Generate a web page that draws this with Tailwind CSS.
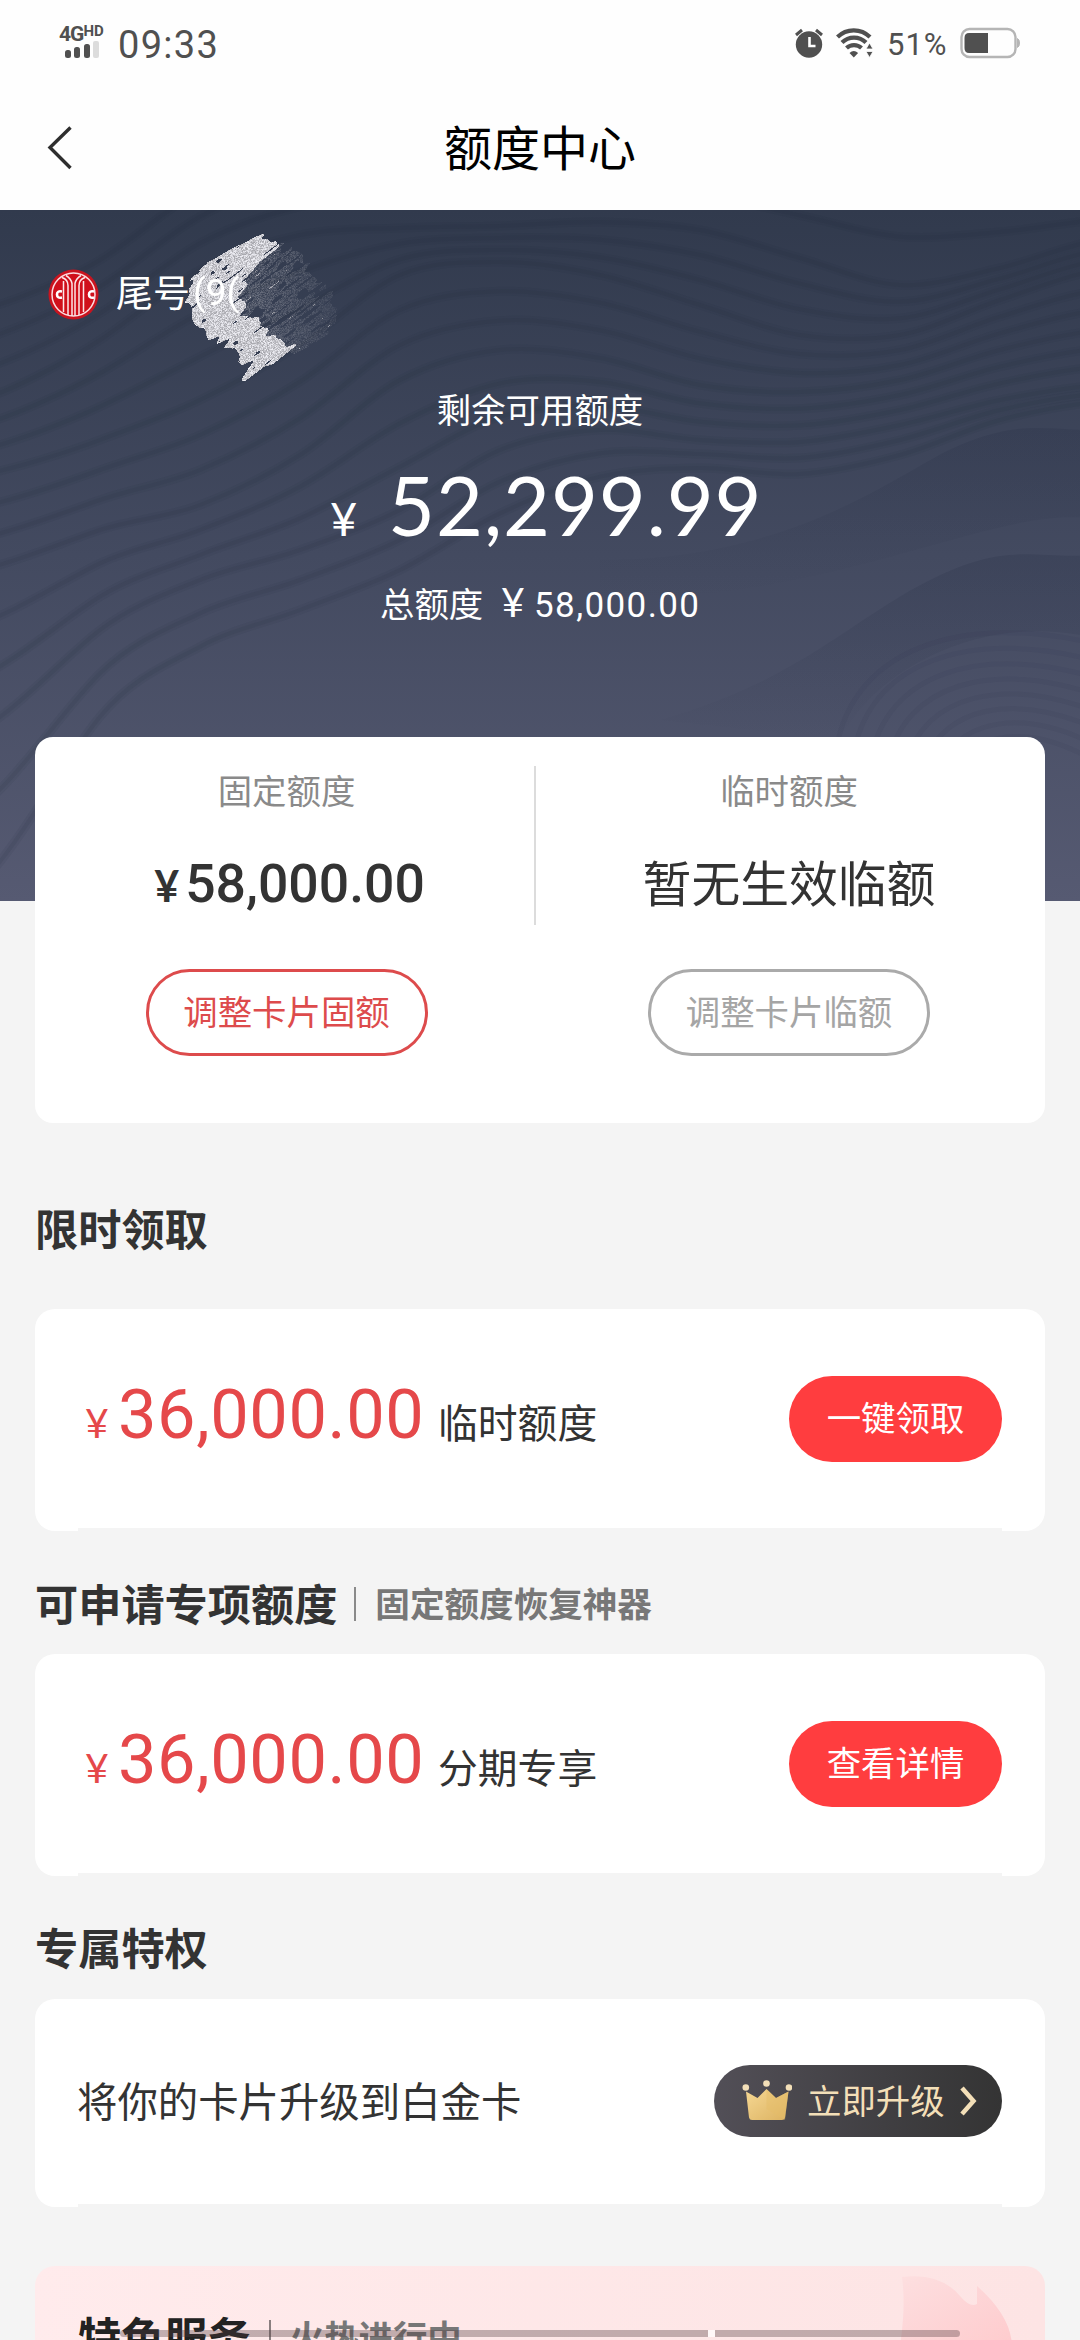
<!DOCTYPE html>
<html lang="zh-CN">
<head>
<meta charset="utf-8">
<title>额度中心</title>
<script src="https://cdn.jsdelivr.net/npm/@tailwindcss/browser@4"></script>
</head>
<body class="w-[1080px] h-[2340px] overflow-hidden bg-[#f4f4f4] text-[#333] font-['Noto_Sans_CJK_SC',sans-serif]">
<div class="relative w-[1080px] h-[2340px] overflow-hidden flex flex-col">

  <!-- status bar + title bar -->
  <header class="h-[210px] shrink-0 bg-[#fefefe] flex flex-col">
    <div class="h-[86px] flex justify-between pl-[59px] pr-[58px] text-[#505050] font-['Roboto',sans-serif]">
      <div class="flex items-center">
        <div class="flex flex-col w-[48px] mt-[-2px]">
          <div class="flex items-start leading-none font-bold h-[16px]"><span class="text-[21px] leading-[18px] tracking-[-1px]">4G</span><span class="text-[15px] leading-[13px]">HD</span></div>
          <svg class="w-[44px] h-[18px]" viewBox="0 0 44 18" fill="#505050"><rect x="6" y="9" width="6" height="8" rx="2.5"/><rect x="15" y="6" width="6" height="11" rx="2.5"/><rect x="25" y="3" width="6" height="14" rx="2.5"/><rect x="34" y="0" width="6" height="17" rx="2" fill="#dcdcdc"/></svg>
        </div>
        <span class="ml-[11px] mt-[3px] text-[38px] leading-none tracking-[1.3px]">09:33</span>
      </div>
      <div class="flex items-center">
        <svg class="w-[30px] h-[30px]" viewBox="0 0 30 30"><circle cx="15" cy="16.5" r="13.2" fill="#505050"/><path d="M2 7l6-5M28 7l-6-5" stroke="#505050" stroke-width="3"/><path d="M15.5 9v9h6" stroke="#fff" stroke-width="2.6" fill="none"/></svg>
        <svg class="ml-[12px] w-[38px] h-[30px]" viewBox="0 0 38 30" fill="none" stroke="#505050" stroke-width="4.2"><path d="M1.500 9a23 23 0 0 1 32.500 0"/><path d="M6 14.500a17 17 0 0 1 24 0"/><path d="M10.500 20a11 11 0 0 1 15 0"/><path d="M13.500 25l4.300 4.500 4.300-4.500q-4.300-4-8.600 0z" fill="#505050" stroke="none"/><path d="M30 21l3.500-6 3.500 6zM30 23.500l3.500 6 3.500-6z" fill="#505050" stroke="#fff" stroke-width=".8"/></svg>
        <span class="ml-[13px] w-[64px] mt-[2px] text-[31px] leading-none tracking-[1px]">51%</span>
        <svg class="ml-[9px] w-[62px] h-[32px]" viewBox="0 0 62 32"><rect x="1.500" y="2" width="54" height="28" rx="8" fill="none" stroke="#b5b5b5" stroke-width="2.400"/><path d="M9 6h19v20H9q-4.500 0-4.500-5V11q0-5 4.500-5z" fill="#505050"/><path d="M57.500 11.500q2 1 2 4.500t-2 4.500z" fill="#b5b5b5" stroke="#b5b5b5"/></svg>
      </div>
    </div>
    <div class="h-[124px] grid grid-cols-[200px_1fr_200px] items-center">
      <svg class="ml-[46px] mt-[-1px] w-[28px] h-[46px]" viewBox="0 0 28 46" fill="none" stroke="#2e2e2e" stroke-width="3.400"><path d="M24.500 2.500L4 22.500l20.500 20.500"/></svg>
      <h1 class="mt-[-6px] text-center text-[48px] leading-[60px] text-black">额度中心</h1>
    </div>
  </header>

  <!-- available limit -->
  <section class="relative h-[691px] shrink-0 bg-linear-to-b from-[#313a4d] via-[#434a60] to-[#565a72] text-white">
    <svg id="waves" class="absolute inset-0 w-[1080px] h-[691px]" viewBox="0 210 1080 691" fill="none"></svg>
    <div class="relative flex flex-col">
      <div class="flex items-center h-[168px] pl-[48px]">
        <svg class="w-[51px] h-[51px]" viewBox="0 0 51 51">
          <circle cx="25.500" cy="25.500" r="25" fill="#c9141f"/>
          <circle cx="25.500" cy="25.500" r="21.500" fill="#d0101b" stroke="#fbdde0" stroke-width="1.500"/>
          <g fill="none" stroke="#fbe6e8" stroke-width="1.500"><path d="M14 8.500q6 2 6 8v29.500M15.500 12v31M18 6.500q5 3 6 8v32.500M37 8.500q-6 2-6 8v29.500M35.500 12v31M33 6.500q-5 3-6 8v32.500"/></g>
          <g fill="none" stroke="#fff" stroke-width="2.600"><path d="M14 22.500q-5-1-5 3t5 3M46 22.500q-5-1-5 3t5 3"/></g>
        </svg>
        <span class="ml-[17px] mt-[-5px] text-[37px] leading-none">尾号</span>
      </div>
      <div class="h-[56px] mt-[2px] text-center text-[34.400px] leading-[56px]">剩余可用额度</div>
      <div class="flex items-baseline h-[96px] mt-[21px] pl-[330px] leading-[96px]">
        <span class="w-[58px] text-[47px] font-['Lato',sans-serif]">¥</span>
        <span class="text-[81px] font-['Lato',sans-serif] tracking-[0.9px]">52,299.99</span>
      </div>
      <div class="flex items-baseline h-[56px] mt-[21px] pl-[380px] leading-[56px]">
        <span class="w-[121px] text-[34.400px]">总额度</span>
        <span class="w-[33px] text-[41px] font-['Lato',sans-serif]">¥</span>
        <span class="text-[35px] font-['Roboto',sans-serif] tracking-[1.400px]">58,000.00</span>
      </div>
    </div>
    <canvas id="scribble" width="170" height="160" class="absolute left-[180px] top-[20px] w-[170px] h-[160px]"></canvas>
    <span class="absolute left-[193px] top-[63px] text-[37px] leading-[40px] font-['Roboto',sans-serif]">(9(</span>
  </section>

  <main class="relative mt-[-164px] px-[35px] flex flex-col">
    <!-- fixed / temporary limits -->
    <section class="relative h-[386px] rounded-[18px] bg-white grid grid-cols-[499px_2px_1fr]">
      <div class="flex flex-col items-center">
        <div class="mt-[25px] ml-[4px] text-[34.400px] leading-[54px] text-[#8a8a8a]">固定额度</div>
        <div class="mt-[33px] ml-[10px] flex items-baseline h-[70px] leading-[70px] font-medium"><span class="text-[43px] w-[31px] font-bold font-['Lato',sans-serif]">¥</span><span class="text-[53.500px] font-['Roboto',sans-serif]">58,000.00</span></div>
        <div class="mt-[50px] ml-[4px] w-[282px] h-[87px] rounded-full border-[3px] border-[#dd4b4c] flex justify-center text-[34.400px] leading-[77px] text-[#dd4b4c]">调整卡片固额</div>
      </div>
      <div class="mt-[29px] h-[159px] bg-[#dcdcdc]"></div>
      <div class="flex flex-col items-center">
        <div class="mt-[25px] mr-[3px] text-[34.400px] leading-[54px] text-[#8a8a8a]">临时额度</div>
        <div class="mt-[30px] mr-[3px] h-[70px] leading-[70px] text-[48.800px]">暂无生效临额</div>
        <div class="mt-[53px] mr-[3px] w-[282px] h-[87px] rounded-full border-[3px] border-[#aaa] flex justify-center text-[34.400px] leading-[77px] text-[#a5a5a5]">调整卡片临额</div>
      </div>
    </section>

    <h2 class="mt-[67px] h-[80px] text-[43.200px] leading-[74px] font-bold">限时领取</h2>
    <section class="mt-[39px] h-[222px] rounded-[20px] bg-white flex flex-col">
      <div class="h-[219px] flex items-center justify-between pl-[50px] pr-[43px]">
        <div class="flex items-baseline leading-[80px]">
          <span class="w-[33px] text-[41px] font-['Lato',sans-serif] text-[#e5484a]">¥</span>
          <span class="w-[320px] text-[68.500px] tracking-[0.6px] font-['Roboto',sans-serif] text-[#e5484a]">36,000.00</span>
          <span class="text-[39.800px]">临时额度</span>
        </div>
        <div class="w-[213px] h-[86px] rounded-full bg-[#ff3d3f] text-center text-[34.400px] leading-[81px] text-white">一键领取</div>
      </div>
      <div class="mx-[43px] h-[3px] bg-[#f4f4f4]"></div>
    </section>

    <div class="mt-[31px] h-[80px] flex items-center">
      <h2 class="text-[43.200px] leading-[74px] font-bold">可申请专项额度</h2>
      <div class="ml-[17px] mt-[4px] w-[2px] h-[34px] bg-[#8a8a8a]"></div>
      <span class="ml-[19px] text-[34.600px] leading-[74px] font-bold text-[#777]">固定额度恢复神器</span>
    </div>
    <section class="mt-[12px] h-[222px] rounded-[20px] bg-white flex flex-col">
      <div class="h-[219px] flex items-center justify-between pl-[50px] pr-[43px]">
        <div class="flex items-baseline leading-[80px]">
          <span class="w-[33px] text-[41px] font-['Lato',sans-serif] text-[#e5484a]">¥</span>
          <span class="w-[320px] text-[68.500px] tracking-[0.6px] font-['Roboto',sans-serif] text-[#e5484a]">36,000.00</span>
          <span class="text-[39.800px]">分期专享</span>
        </div>
        <div class="w-[213px] h-[86px] rounded-full bg-[#ff3d3f] text-center text-[34.400px] leading-[81px] text-white">查看详情</div>
      </div>
      <div class="mx-[43px] h-[3px] bg-[#f4f4f4]"></div>
    </section>

    <h2 class="mt-[33px] h-[80px] text-[43.200px] leading-[74px] font-bold">专属特权</h2>
    <section class="mt-[10px] h-[208px] rounded-[20px] bg-white flex flex-col">
      <div class="h-[205px] flex items-center justify-between pl-[42px] pr-[43px]">
        <div class="mt-[-4px] text-[40.400px] leading-[60px]">将你的卡片升级到白金卡</div>
        <div class="mt-[-2px] w-[288px] h-[72px] rounded-full bg-linear-to-r from-[#524f57] to-[#343434] flex items-center">
          <svg class="ml-[28px] mt-[-2px] w-[50px] h-[42px]" viewBox="0 0 50 42"><defs><linearGradient id="gold" x1="0" y1="0" x2="1" y2="1"><stop offset="0" stop-color="#f6d894"/><stop offset="1" stop-color="#dcb260"/></linearGradient></defs><g fill="#f3dfb8"><circle cx="3.800" cy="8.500" r="3.300"/><circle cx="24.500" cy="4.500" r="3.300"/><circle cx="47" cy="8.500" r="3.300"/></g><path d="M4 12.500l11.500 6.500 9-9 9.500 9 12.500-6.500-3.500 26q-.5 2.500-3 2.500H10q-2.500 0-3-2.500z" fill="url(#gold)"/><path d="M24.500 10v20l9.500-11zM15.500 19l9 11L43 41 46.500 12.500 34 19l-9.500 11z" fill="#e5bd69" opacity=".45"/></svg>
          <span class="ml-[15px] mt-[-4px] text-[34.400px] leading-[70px] text-[#f3dfb8]">立即升级</span>
          <svg class="ml-[13px] w-[22px] h-[32px]" viewBox="0 0 22 32" fill="none" stroke="#f3dfb8" stroke-width="4.500"><path d="M4 3l11.500 13L4 29"/></svg>
        </div>
      </div>
      <div class="mx-[43px] h-[3px] bg-[#f4f4f4]"></div>
    </section>

    <!-- featured services -->
    <section class="relative mt-[59px] h-[160px] rounded-t-[20px] bg-linear-to-r from-[#ffebec] to-[#fde4e4] overflow-hidden">
      <svg class="absolute left-[850px] top-0 w-[160px] h-[80px]" viewBox="0 0 160 80"><defs><linearGradient id="petal" x1="0" y1="0" x2="1" y2="1"><stop offset="0" stop-color="#fddfe0"/><stop offset="1" stop-color="#fecbcd"/></linearGradient></defs><path d="M17 11q38-5 58 19 10 12 17 8V20q34 30 35 60H15q6-40 2-69z" fill="url(#petal)"/></svg>
      <div class="relative flex items-center pl-[43px] h-[138px]">
        <h2 class="text-[43.200px] leading-[74px] font-bold text-[#222]">特色服务</h2>
        <div class="ml-[18px] mt-[4px] w-[2px] h-[34px] bg-[#8a7f80]"></div>
        <span class="ml-[19px] text-[34.400px] leading-[74px] font-bold text-[#777]">火热进行中</span>
      </div>
    </section>
  </main>

  <!-- system gesture bar -->
  <div class="absolute left-[120px] top-[2330px] w-[840px] h-[7px] rounded-full overflow-hidden flex">
    <div class="w-[588px] bg-[#4f3c3e]/35"></div><div class="w-[7px] bg-white/70"></div><div class="flex-1 bg-[#4f3c3e]/35"></div>
  </div>
</div>

<script>
// Contour lines of the hero background, blended between key curves
(function () {
  var X = [-20, 100, 200, 300, 400, 500, 600, 700, 800, 900, 1000, 1100];
  var keys = [
    [310, 260, 190, 150, 140, 135, 130, 125, 130, 140, 160, 180],
    [400, 340, 270, 235, 228, 226, 222, 230, 258, 285, 268, 240],
    [475, 440, 400, 345, 275, 262, 275, 305, 335, 335, 300, 270],
    [570, 530, 505, 455, 380, 350, 358, 385, 392, 380, 350, 330],
    [730, 630, 580, 550, 510, 450, 430, 440, 442, 425, 400, 385],
    [960, 760, 680, 640, 600, 545, 500, 482, 490, 470, 430, 410]
  ];
  function path(ys) {
    var d = 'M' + X[0] + ' ' + ys[0];
    for (var i = 1; i < X.length; i++) {
      var p0 = ys[Math.max(i - 2, 0)], p1 = ys[i - 1], p2 = ys[i], p3 = ys[Math.min(i + 1, ys.length - 1)];
      d += 'C' + (X[i - 1] + 33) + ' ' + (p1 + (p2 - p0) / 6) + ' ' + (X[i] - 33) + ' ' + (p2 - (p3 - p1) / 6) + ' ' + X[i] + ' ' + p2;
    }
    return d;
  }
  var out = '';
  for (var k = 0; k < keys.length - 1; k++)
    for (var s = 0; s < 3; s++) {
      var ys = keys[k].map(function (v, i) { return v + (keys[k + 1][i] - v) * s / 3; });
      var d = path(ys);
      out += '<path d="' + d + '" stroke="#20283c" stroke-opacity=".07" stroke-width="9"/><path d="' + d + '" stroke="#20283c" stroke-opacity=".09" stroke-width="4"/>';
    }
  out = '<defs><linearGradient id="w" x1="0" y1="0" x2="0" y2="1"><stop offset="0" stop-color="#262e44" stop-opacity=".22"/><stop offset="1" stop-color="#262e44" stop-opacity="0"/></linearGradient></defs>' + out +
    '<path d="M600 560C800 560 900 470 960 445S1040 430 1100 430V520C1000 500 850 600 600 600z" fill="url(#w)"/>' +
    '<path d="M660 720C800 680 850 620 930 580S1030 560 1100 555V640C1000 610 880 660 840 740z" fill="url(#w)"/>';
  for (var r = 0; r < 8; r++)
    out += '<path d="M' + (835 + r * 18) + ' 760C' + (845 + r * 20) + ' ' + (650 + r * 12) + ' ' + (960 + r * 10) + ' ' + (610 + r * 16) + ' 1100 ' + (645 + r * 17) + '" stroke="#20283c" stroke-opacity=".06" stroke-width="5"/>';
  document.getElementById('waves').innerHTML = out;
})();

// Chalk scribble over the card number
(function () {
  var seed = 7;
  function rnd() { seed = (seed * 16807) % 2147483647; return seed / 2147483647; }
  function hash(a, b) { var n = Math.sin(a * 127.1 + b * 311.7) * 43758.5453; return n - Math.floor(n); }
  function noise(x, y) {
    var i = Math.floor(x), j = Math.floor(y), f = x - i, g = y - j;
    f = f * f * (3 - 2 * f); g = g * g * (3 - 2 * g);
    return (hash(i, j) * (1 - f) + hash(i + 1, j) * f) * (1 - g) + (hash(i, j + 1) * (1 - f) + hash(i + 1, j + 1) * f) * g;
  }
  function poly(p) { var q = new Path2D(); p.forEach(function (c, i) { i ? q.lineTo(c[0], c[1]) : q.moveTo(c[0], c[1]); }); q.closePath(); return q; }
  var cv = document.getElementById('scribble'), ctx = cv.getContext('2d');
  var dense = poly([[83,5],[97,9],[94,20],[76,34],[64,48],[62,70],[64,86],[80,92],[84,104],[102,108],[112,118],[92,134],[84,136],[63,152],[68,134],[54,124],[46,112],[32,108],[14,90],[7,70],[10,50],[24,34],[56,16]]);
  var faint = poly([[94,14],[112,18],[130,40],[150,62],[155,86],[148,104],[112,124],[84,106],[58,78],[62,48]]);
  var img = ctx.createImageData(170, 160), c = Math.cos(-0.65), s = Math.sin(-0.65);
  for (var y = 0; y < 160; y++) for (var x = 0; x < 170; x++) {
    var u = x * c + y * s, v = -x * s + y * c;
    var n = noise(u / 12, v / 2), m = noise(u / 30 + 9, v / 4), o = (y * 170 + x) * 4;
    var dx = (m - 0.5) * 15, a = 0, g = 0;
    if (ctx.isPointInPath(dense, x + dx * c, y + dx * s) && n > 0.12) { a = 255; g = 165 + rnd() * 75; }
    else if (ctx.isPointInPath(faint, x + dx * c, y + dx * s)) {
      var t = 1 - (x - 60) / 120;
      g = 150 + rnd() * 60; a = n > 0.95 ? 210 : (n > 0.3 ? rnd() * 110 * t + 8 : 0);
    }
    img.data[o] = g; img.data[o + 1] = g; img.data[o + 2] = g + 6; img.data[o + 3] = a;
  }
  ctx.putImageData(img, 0, 0);
})();
</script>
</body>
</html>
